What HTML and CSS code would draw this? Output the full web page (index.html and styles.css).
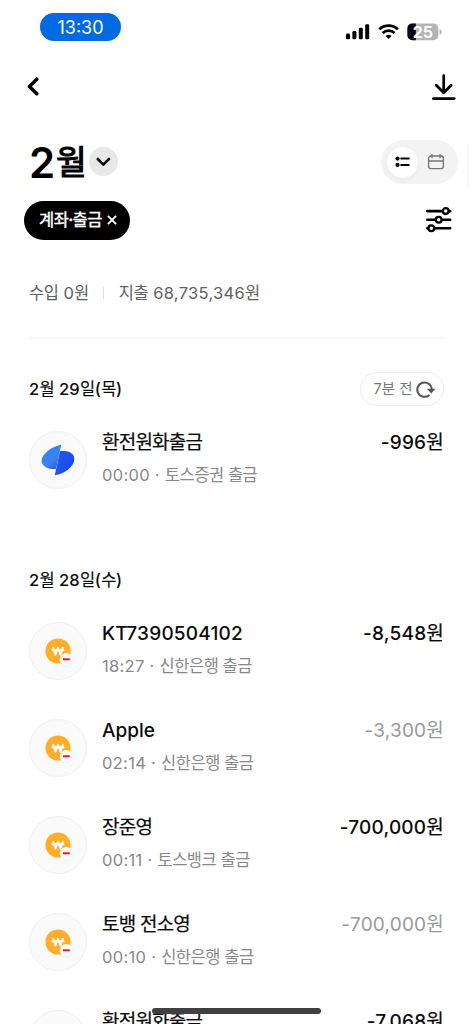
FILE: index.html
```html
<!DOCTYPE html>
<html lang="ko">
<head>
<meta charset="utf-8">
<meta name="viewport" content="width=device-width">
<title>2월</title>
<link rel="stylesheet" href="styles.css">
</head>
<body>
<svg width="0" height="0" class="defs">
  <symbol id="won" viewBox="0 0 30 30">
    <circle cx="13" cy="13" r="12.6" fill="#ffae2b"/>
    <path d="M8 9l2.500 7.800L13 9.800l2.500 7L18 9M6.700 12.300h12.600" fill="none" stroke="#fff" stroke-width="1.900" stroke-linejoin="round"/>
    <circle cx="21.300" cy="21.800" r="6.600" fill="#e9e9e9" opacity=".6"/>
    <circle cx="21.300" cy="21.200" r="6.100" fill="#fff"/>
    <rect x="18" y="20.300" width="6.800" height="2" fill="#fb1220"/>
  </symbol>
</svg>
<div class="screen">
  <div class="status">
    <div class="time">13:30</div>
    <svg class="signals" width="98" height="20" viewBox="0 0 98 20">
      <rect x="1" y="12.500" width="4" height="5.800" rx="1.300"/><rect x="7.400" y="10" width="4" height="8.300" rx="1.300"/><rect x="13.800" y="6.700" width="4" height="11.600" rx="1.300"/><rect x="20.200" y="3.200" width="4" height="15.100" rx="1.300"/>
      <path d="M34.300 8.300a13.400 13.400 0 0 1 18.600 0M37.700 12a8.400 8.400 0 0 1 11.800 0" fill="none" stroke="#000" stroke-width="2.700"/>
      <path d="M43.600 18l-3-3q3-2.400 6 0z"/>
      <rect x="62.400" y="2.400" width="31" height="16.800" rx="5" fill="#b4b4b4"/>
      <path d="M70.800 2.400h-3.400a5 5 0 0 0-5 5v6.800a5 5 0 0 0 5 5h3.400z"/>
      <path d="M94.600 8.200q2.200 1 2.200 2.800t-2.200 2.800z" fill="#b4b4b4"/>
      <text x="77.900" y="16.600" text-anchor="middle" class="charge">25</text>
    </svg>
  </div>
  <nav class="nav">
    <svg width="14" height="20" viewBox="0 0 14 20"><path d="M10.800 2.200L3.400 9.500l7.400 7.300" class="stroke heavy"/></svg>
    <svg width="24" height="28" viewBox="0 0 24 28"><path d="M11.700 2.500v17M4.300 12.300l7.400 7.500 7.400-7.500M1.300 25.600h21" class="stroke download"/></svg>
  </nav>
  <header class="heading">
    <h1 class="month"><span class="num">2</span><span class="unit">월</span></h1>
    <div class="drop"><svg width="28" height="28" viewBox="0 0 28 28"><path d="M8.800 13l5.600 5.600 5.600-5.600" class="stroke"/></svg></div>
    <div class="toggle">
      <div class="active"><svg width="16" height="12" viewBox="0 0 16 12"><circle cx="2.500" cy="2.600" r="2.100"/><circle cx="2.500" cy="8.900" r="2.100"/><path d="M6.200 2.600h7.600M6.200 8.900h7.600" class="stroke thin"/></svg></div>
      <svg width="18" height="18" viewBox="0 0 18 18"><path d="M4 3h10a2.400 2.400 0 0 1 2.400 2.400v7.800a2.400 2.400 0 0 1-2.400 2.400H4a2.400 2.400 0 0 1-2.400-2.400V5.400A2.400 2.400 0 0 1 4 3zM1.600 8h14.800M5 1v4.200M13 1v4.200" fill="none" stroke="#777" stroke-width="1.400"/></svg>
    </div>
    <div class="edge"></div>
  </header>
  <div class="filters">
    <div class="chip"><span>계좌·출금</span><svg width="10" height="10" viewBox="0 0 10 10"><path d="M.9.900l8.200 8.200M9.100.900L.9 9.100" fill="none" stroke="#fff" stroke-width="1.900"/></svg></div>
    <svg width="28" height="28" viewBox="0 0 28 28">
      <path d="M2.300 5.100h22.900M2.300 13.700h22.900M2.300 22.200h22.900" class="stroke"/>
      <g fill="#fff" stroke="#000" stroke-width="2.300"><circle cx="20.700" cy="5.100" r="2.900"/><circle cx="13.700" cy="13.700" r="2.900"/><circle cx="6.300" cy="22.200" r="2.900"/></g>
    </svg>
  </div>
  <div class="summary"><div class="income"><span class="ko">수입</span> 0<span class="ko">원</span></div><i></i><div class="expense"><span class="ko">지출</span> 68,735,346<span class="ko">원</span></div></div>
  <main>
    <section>
      <div class="day"><h2>2<span class="ko">월</span> 29<span class="ko">일</span>(<span class="ko">목</span>)</h2>
        <div class="refresh"><span>7분 전</span><svg width="20" height="18" viewBox="0 0 20 18"><path d="M13.400 14.900A7.200 7.200 0 1 1 15.700 9.300" fill="none" stroke="#555" stroke-width="2"/><path d="M11 8.700h8.400l-4.200 4.800z" fill="#555"/></svg></div>
      </div>
      <article class="row"><div class="avatar"><svg width="36" height="36" viewBox="0 0 36 36">
        <defs><linearGradient id="a" x1=".2" y1="0" x2=".8" y2="1"><stop offset="0" stop-color="#2a8cff"/><stop offset=".65" stop-color="#3c80f0"/><stop offset="1" stop-color="#215edd"/></linearGradient><linearGradient id="b" x1="0" y1="0" x2="1" y2=".5"><stop offset="0" stop-color="#265fe5"/><stop offset="1" stop-color="#1547f4"/></linearGradient></defs>
        <path d="M21.200 2.800C13 4.200 2.500 11 1.600 18c-.5 6 6 9.600 14.500 9z" fill="url(#a)"/>
        <path d="M20 9.100c8.200-.7 14.200 1.600 14.300 7.800.1 7.500-9.800 15-19.600 16.300l2.300-10z" fill="url(#b)"/></svg></div>
        <div class="info"><div class="title"><span class="ko">환전원화출금</span></div><div class="sub">00:00 · <span class="ko">토스증권 출금</span></div></div><div class="amount">-996<span class="ko">원</span></div></article>
    </section>
    <section>
      <div class="day"><h2>2<span class="ko">월</span> 28<span class="ko">일</span>(<span class="ko">수</span>)</h2></div>
      <article class="row"><div class="avatar coin"><svg width="30" height="30"><use href="#won"/></svg></div><div class="info"><div class="title">KT7390504102</div><div class="sub">18:27 · <span class="ko">신한은행 출금</span></div></div><div class="amount">-8,548<span class="ko">원</span></div></article>
      <article class="row"><div class="avatar coin"><svg width="30" height="30"><use href="#won"/></svg></div><div class="info"><div class="title name">Apple</div><div class="sub">02:14 · <span class="ko">신한은행 출금</span></div></div><div class="amount muted">-3,300<span class="ko">원</span></div></article>
      <article class="row"><div class="avatar coin"><svg width="30" height="30"><use href="#won"/></svg></div><div class="info"><div class="title"><span class="ko">장준영</span></div><div class="sub">00:11 · <span class="ko">토스뱅크 출금</span></div></div><div class="amount">-700,000<span class="ko">원</span></div></article>
      <article class="row"><div class="avatar coin"><svg width="30" height="30"><use href="#won"/></svg></div><div class="info"><div class="title"><span class="ko">토뱅 전소영</span></div><div class="sub">00:10 · <span class="ko">신한은행 출금</span></div></div><div class="amount muted">-700,000<span class="ko">원</span></div></article>
      <article class="row"><div class="avatar"></div><div class="info"><div class="title"><span class="ko">환전원화출금</span></div></div><div class="amount">-7,068<span class="ko">원</span></div></article>
    </section>
  </main>
  <div class="home"></div>
</div>
</body>
</html>
```
FILE: styles.css
```css
* { box-sizing: border-box; }
body { margin: 0; background: #fff; color: #0b0b0b; font-family: Inter, "Noto Sans CJK KR", sans-serif; overflow: hidden; }
svg { display: block; flex: none; }
.defs { position: absolute; }
.screen { position: relative; width: 473px; height: 1024px; overflow: hidden; background: #fff; }
.stroke { fill: none; stroke: #000; stroke-width: 2.6; stroke-linecap: round; stroke-linejoin: round; }
.stroke.heavy { stroke-width: 3.5; }
.stroke.download { stroke-width: 2.7; }
.stroke.thin { stroke-width: 2; }
.ko { letter-spacing: -0.028em; font-weight: 400; }

.status { height: 54px; padding: 13px 30px 0 40px; display: flex; justify-content: space-between; }
.time { width: 81px; height: 28px; border-radius: 14px; background: #006be0; color: #fff; font-size: 18px; line-height: 29px; text-align: center; }
.signals { margin-top: 8px; }
.charge { fill: #fff; font-size: 16px; font-weight: 700; }

.nav { height: 66px; padding: 0 17px 0 26px; display: flex; align-items: center; justify-content: space-between; }
.heading { height: 84px; padding: 20px 4px 0 29px; display: flex; align-items: flex-start; }
.month { margin: 0; width: 60px; height: 46px; display: flex; line-height: 46px; white-space: nowrap; color: #000; }
.num { font-size: 42px; font-weight: 600; width: 27px; }
.unit { font-size: 33.500px; font-weight: 400; line-height: 45px; -webkit-text-stroke: 1.1px #000; }
.drop { margin-top: 7px; width: 29px; height: 29px; border-radius: 50%; background: #e8e8e8; }
.drop svg { margin-top: -1px; }
.toggle { width: 77px; height: 44px; margin-left: auto; padding: 0 13px 0 6px; border-radius: 22px; background: #f3f3f3; display: flex; align-items: center; justify-content: space-between; }
.active { width: 31px; height: 31px; border-radius: 50%; background: #fff; display: grid; place-items: center; box-shadow: 0 2px 6px #0000000c; }
.edge { width: 3px; height: 44px; margin: 4px 0 0 8px; background: #fafafa; }
.filters { height: 36px; padding: 0 20px 0 24px; display: flex; align-items: center; justify-content: space-between; margin-top: -2px; }
.chip { width: 106px; height: 39px; padding-left: 2px; border-radius: 20px; background: #000; color: #fff; display: flex; align-items: center; justify-content: center; gap: 5px; font-family: "Noto Sans CJK KR", sans-serif; font-size: 16.500px; font-weight: 400; -webkit-text-stroke: .4px #fff; letter-spacing: -0.5px; white-space: nowrap; }
.chip span { height: 39px; line-height: 37px; }

.summary { margin: 42px 29px 0; padding-top: 1px; height: 59px; border-bottom: 2px solid #f7f7f7; display: flex; align-items: flex-start; color: #606060; font-size: 16.500px; letter-spacing: .3px; line-height: 24px; white-space: nowrap; }
.summary i { width: 1px; height: 12px; margin: 6px 15px 0 14px; background: #ddd; }

.day { height: 34px; margin: 33px 29px 25px; display: flex; align-items: center; justify-content: space-between; }
h2 { margin: 0; font-size: 16.500px; font-weight: 500; letter-spacing: .3px; line-height: 30px; white-space: nowrap; }
h2 .ko { -webkit-text-stroke: .15px currentColor; }
.refresh { width: 84px; height: 34px; border: 1.500px solid #ececec; border-radius: 17px; display: flex; align-items: center; justify-content: center; gap: 4px; padding-left: 6px; font-size: 14.500px; line-height: 30px; color: #777; white-space: nowrap; }
.row { height: 58px; margin: 0 30px 39px 29px; display: flex; align-items: flex-start; }
.avatar { flex: none; width: 58px; height: 58px; border-radius: 50%; border: 1.500px solid #f0f0f0; background: #fafafa; display: grid; place-items: center; }
.coin svg { margin: 3px 0 0 4px; }
.info { margin-left: 15px; white-space: nowrap; }
.title, .amount { height: 24px; line-height: 24px; font-size: 19px; font-weight: 500; letter-spacing: .2px; white-space: nowrap; }
.title.name { letter-spacing: 0; }
.title .ko, .amount .ko { letter-spacing: -0.041em; -webkit-text-stroke: .2px currentColor; }
.sub { height: 24px; margin-top: 9px; line-height: 23px; font-size: 16.500px; letter-spacing: .3px; color: #888; }
.amount { margin-left: auto; line-height: 23px; }
.muted { color: #999; font-weight: 400; }
.muted .ko { -webkit-text-stroke: 0; }
section + section { padding-top: 2px; }
.home { position: absolute; left: 152px; top: 1008px; width: 169px; height: 6px; border-radius: 3px; background: #404040; }
```
